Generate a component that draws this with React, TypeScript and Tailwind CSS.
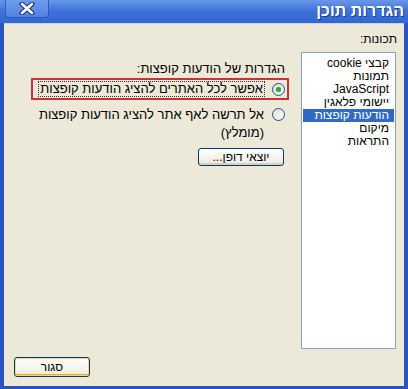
import React from 'react'

const font = { fontFamily: '"Liberation Sans", "DejaVu Sans", Arial, sans-serif' }

const items = ['קבצי cookie', 'תמונות', 'JavaScript', 'יישומי פלאגין', 'הודעות קופצות', 'מיקום', 'התראות']

function Radio({ checked }: { checked?: boolean }) {
  return (
    <span className="w-[13px] h-[13px] shrink-0 rounded-full border border-[#1c5180] bg-gradient-to-br from-[#dcdcd4] to-white flex items-center justify-center">
      {checked && <span className="w-[5px] h-[5px] rounded-full bg-[#2fa82f] shadow-[0_0_1px_#7fd67f]" />}
    </span>
  )
}

export default function App() {
  return (
    <div className="w-[408px] h-[389px] bg-[#2a54c0] flex flex-col text-black" style={font}>
      {/* Title bar */}
      <div className="h-[23px] shrink-0 flex items-start justify-between bg-gradient-to-b from-[#6a98e8] via-[#3d70d8] to-[#3466d0] pl-[5px] pr-[4px]">
        <div className="w-[44px] h-[18px] rounded-b-[4px] border border-t-0 border-[#2d5bc4] bg-gradient-to-b from-[#6f9bec] to-[#5282e0] flex items-center justify-center">
          <svg width="16" height="13" viewBox="0 0 16 13">
            <path d="M3 2 L13 11 M13 2 L3 11" stroke="#1b3a7a" strokeWidth="5" strokeLinecap="round" />
            <path d="M3 2 L13 11 M13 2 L3 11" stroke="#ffffff" strokeWidth="2.6" strokeLinecap="round" />
          </svg>
        </div>
        <div dir="rtl" className="text-white font-bold text-[16px] leading-[22px] [text-shadow:1px_1px_0_#1a3c8c]">
          הגדרות תוכן
        </div>
      </div>

      {/* Body */}
      <div className="flex-1 flex ml-[4px] mr-[4px] mb-[3px] border-t border-[#c9d6f2]">
        <div dir="rtl" className="flex-1 bg-[#ece9d8] flex flex-col pr-[7px] pl-[10px] pt-[8px] pb-[9px] text-[11px]">
          <div className="h-[14px] leading-[14px] text-[12px]">תכונות:</div>

          <div className="flex flex-1 mt-[6px]">
            {/* List */}
            <div className="w-[95px] mr-[1px] shrink-0 bg-white border border-[#8ba0bd] pt-[4px]">
              {items.map((it, i) => (
                <div
                  key={it}
                  className={`h-[13px] leading-[13px] pr-[5px] mx-[1px] whitespace-nowrap text-[12px] ${
                    i === 4 ? 'bg-[#316ac5] text-white' : ''
                  }`}
                >
                  {it}
                </div>
              ))}
            </div>

            {/* Options column */}
            <div className="w-[258px] mr-[12px] flex flex-col text-[13px]">
              <div className="mt-[10px] h-[14px] leading-[14px] pr-[4px]">הגדרות של הודעות קופצות:</div>

              <div className="mt-[2px] h-[22px] border-2 border-[#c8323e] flex items-center pr-[2px]">
                <Radio checked />
                <span className="mr-[7px] px-[1px] leading-[14px] border border-dotted border-[#333]">
                  אפשר לכל האתרים להציג הודעות קופצות
                </span>
              </div>

              <div className="mt-[6px] flex items-start pr-[4px]">
                <div className="pt-[2px]">
                  <Radio />
                </div>
                <span className="mr-[8px] leading-[18px]">
                  אל תרשה לאף אתר להציג הודעות קופצות
                  <br />
                  (מומלץ)
                </span>
              </div>

              <div className="mt-[6px] pr-[5px] flex">
                <button className="w-[86px] h-[18px] rounded-[3px] border border-[#003c74] bg-gradient-to-b from-white to-[#ece9de] text-[12px] leading-[16px] shadow-[inset_0_-2px_0_#d6d0c5]">
                  יוצאי דופן...
                </button>
              </div>
            </div>
          </div>

          {/* Bottom */}
          <div className="mt-[8px] flex justify-end">
            <button className="w-[76px] h-[20px] rounded-[3px] border border-[#003c74] bg-gradient-to-b from-white to-[#f0ebd8] text-[12px] leading-[18px] shadow-[inset_0_0_0_1px_#f9d685,inset_0_-2px_0_#e5a93a]">
              סגור
            </button>
          </div>
        </div>
      </div>
    </div>
  )
}
